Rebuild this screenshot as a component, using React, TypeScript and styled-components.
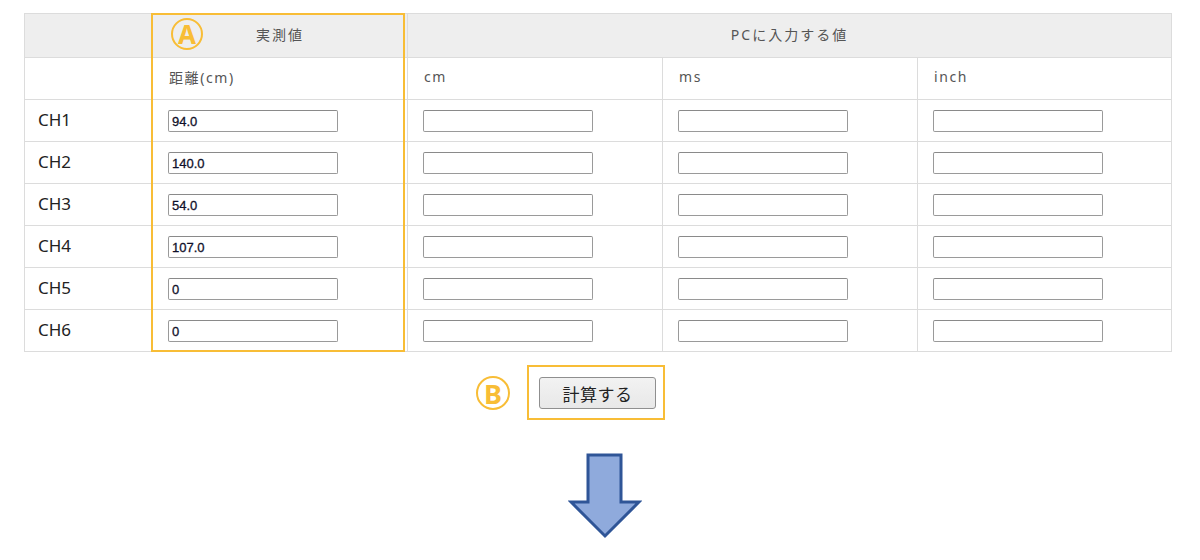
import React from 'react';
import styled, { createGlobalStyle } from 'styled-components';

const GlobalStyle = createGlobalStyle`
  html, body {
    margin: 0;
    padding: 0;
    background: #ffffff;
  }
  body {
    font-family: "Noto Sans", "Noto Sans CJK JP", sans-serif;
  }
`;

const ACCENT = '#f8bd36';

const Page = styled.div`
  width: 1147px;
  padding: 13px 0 0 24px;
`;

const TableWrap = styled.div`
  position: relative;
`;

const Table = styled.table`
  width: 1147px;
  table-layout: fixed;
  border-collapse: collapse;
  border: 1px solid #dcdcdc;
`;

const HeadRow = styled.tr`
  background: #eeeeee;
  height: 44px;
`;

const Row = styled.tr`
  height: 42px;
`;

const HeadCell = styled.th`
  border: 1px solid #dcdcdc;
  font-weight: normal;
  font-size: 14px;
  letter-spacing: 2px;
  color: #555555;
  text-align: center;
  padding: 0 0 3px;
  font-family: "Noto Sans", "Noto Sans CJK JP", sans-serif;
`;

const UnitCell = styled.td`
  border: 1px solid #dcdcdc;
  font-size: 14px;
  letter-spacing: 1.6px;
  color: #555555;
  padding: 0 0 4px 16px;
`;

const ChCell = styled.td`
  border: 1px solid #dcdcdc;
  font-size: 17px;
  color: #222222;
  padding: 0 0 2px 13px;
`;

const InputCell = styled.td`
  border: 1px solid #dcdcdc;
  padding: 0 0 0 15px;
`;

const Field = styled.input`
  box-sizing: border-box;
  display: block;
  width: 170px;
  height: 22px;
  margin: 0;
  padding: 1px 3px 0;
  border: 1px solid #9a9a9a;
  border-top-color: #8a8a8a;
  border-radius: 2px;
  background: #ffffff;
  font-family: "Liberation Sans", Arial, sans-serif;
  font-size: 13px;
  font-weight: normal;
  color: #10102a;
  -webkit-text-stroke: 0.3px #10102a;
  outline: none;
`;

const Highlight = styled.div`
  position: absolute;
  left: 127px;
  top: 0;
  width: 254px;
  height: 339px;
  border: 2.5px solid ${ACCENT};
  box-sizing: border-box;
  pointer-events: none;
`;

const Badge = styled.span<{ $size: number }>`
  position: absolute;
  box-sizing: border-box;
  width: ${p => p.$size}px;
  height: ${p => p.$size}px;
  border: 2px solid ${ACCENT};
  border-radius: 50%;
  display: flex;
  align-items: center;
  justify-content: center;
  color: ${ACCENT};
  font-family: "Noto Sans", sans-serif;
  font-weight: bold;
  font-size: ${p => Math.round(p.$size * 0.8)}px;
  line-height: 1;
`;

const BadgeA = styled(Badge)`
  left: 18px;
  top: 3px;
`;

const ActionRow = styled.div`
  display: flex;
  justify-content: center;
  margin-top: 13px;
`;

const ActionBox = styled.div`
  position: relative;
  margin-left: -3px;
  padding: 10px 7px 9px 10px;
  border: 2.5px solid ${ACCENT};
`;

const BadgeB = styled(Badge)`
  left: -53px;
  top: 9px;
`;

const CalcButton = styled.button`
  display: block;
  width: 117px;
  height: 32px;
  padding: 0;
  border: 1px solid #8f8f8f;
  border-radius: 3px;
  background: linear-gradient(#f2f2f2, #e8e8e8);
  font-family: "Noto Sans CJK JP", sans-serif;
  font-size: 17px;
  color: #222222;
  letter-spacing: 0.5px;
`;

const ArrowRow = styled.div`
  display: flex;
  justify-content: center;
  padding-left: 14px;
  margin-top: 33px;
`;

const DownArrow = () => (
  <svg width="74" height="86" viewBox="0 0 74 86">
    <path
      d="M20 2 H53 V49 H71 L37 83 L3 49 H20 Z"
      fill="#8faadc"
      stroke="#2f5597"
      strokeWidth="3"
      strokeLinejoin="miter"
    />
  </svg>
);

const rows = [
  { ch: 'CH1', value: '94.0' },
  { ch: 'CH2', value: '140.0' },
  { ch: 'CH3', value: '54.0' },
  { ch: 'CH4', value: '107.0' },
  { ch: 'CH5', value: '0' },
  { ch: 'CH6', value: '0' },
];

const App = () => {
  return (
    <>
      <GlobalStyle />
      <Page>
        <TableWrap>
          <Table>
            <colgroup>
              <col style={{ width: 128 }} />
              <col style={{ width: 255 }} />
              <col style={{ width: 255 }} />
              <col style={{ width: 255 }} />
              <col style={{ width: 254 }} />
            </colgroup>
            <thead>
              <HeadRow>
                <HeadCell />
                <HeadCell>実測値</HeadCell>
                <HeadCell colSpan={3}>PCに入力する値</HeadCell>
              </HeadRow>
            </thead>
            <tbody>
              <Row>
                <UnitCell />
                <UnitCell>距離(cm)</UnitCell>
                <UnitCell>cm</UnitCell>
                <UnitCell>ms</UnitCell>
                <UnitCell>inch</UnitCell>
              </Row>
              {rows.map(r => (
                <Row key={r.ch}>
                  <ChCell>{r.ch}</ChCell>
                  <InputCell>
                    <Field defaultValue={r.value} />
                  </InputCell>
                  <InputCell>
                    <Field />
                  </InputCell>
                  <InputCell>
                    <Field />
                  </InputCell>
                  <InputCell>
                    <Field />
                  </InputCell>
                </Row>
              ))}
            </tbody>
          </Table>
          <Highlight>
            <BadgeA $size={32}>A</BadgeA>
          </Highlight>
        </TableWrap>
        <ActionRow>
          <ActionBox>
            <BadgeB $size={34}>B</BadgeB>
            <CalcButton>計算する</CalcButton>
          </ActionBox>
        </ActionRow>
        <ArrowRow>
          <DownArrow />
        </ArrowRow>
      </Page>
    </>
  );
};

export default App;
